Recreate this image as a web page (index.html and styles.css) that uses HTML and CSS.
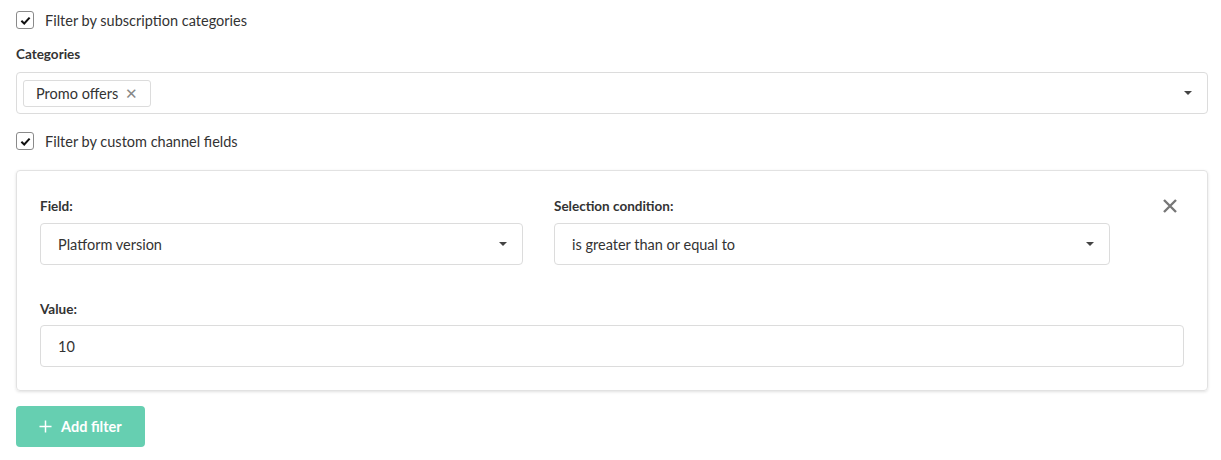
FILE: index.html
```html
<!DOCTYPE html>
<html>
<head>
<meta charset="utf-8">
<link rel="stylesheet" href="styles.css">
</head>
<body>
<div class="page">
  <label class="check">
    <span class="box"><svg viewBox="0 0 12 12" width="11" height="11"><path d="M1.5 6.2 L4.6 9.2 L10.5 2.8" fill="none" stroke="#111" stroke-width="2.2"/></svg></span>
    <span>Filter by subscription categories</span>
  </label>

  <div class="label cat-label">Categories</div>
  <div class="select multi">
    <span class="tag">Promo offers <span class="tag-x">✕</span></span>
    <span class="caret"></span>
  </div>

  <label class="check check2">
    <span class="box"><svg viewBox="0 0 12 12" width="11" height="11"><path d="M1.5 6.2 L4.6 9.2 L10.5 2.8" fill="none" stroke="#111" stroke-width="2.2"/></svg></span>
    <span>Filter by custom channel fields</span>
  </label>

  <div class="card">
    <div class="row">
      <div class="field">
        <div class="label">Field:</div>
        <div class="select"><span>Platform version</span><span class="caret"></span></div>
      </div>
      <div class="cond">
        <div class="label">Selection condition:</div>
        <div class="select"><span>is greater than or equal to</span><span class="caret"></span></div>
      </div>
      <div class="close">
        <svg viewBox="0 0 16 16" width="16" height="16"><path d="M2 2 L14 14 M14 2 L2 14" stroke="#777" stroke-width="2.4" fill="none"/></svg>
      </div>
    </div>
    <div class="value">
      <div class="label">Value:</div>
      <div class="input">10</div>
    </div>
  </div>

  <button class="add"><svg viewBox="0 0 14 14" width="13" height="13"><path d="M7 0.5 V13.5 M0.5 7 H13.5" stroke="#fff" stroke-width="1.6"/></svg><span>Add filter</span></button>
</div>
</body>
</html>
```

FILE: styles.css
```css
* { box-sizing: border-box; }
body {
  margin: 0;
  background: #fff;
  font-family: "Source Sans Pro", Lato, "Noto Sans", sans-serif;
  font-size: 14.5px;
  color: #333;
}
.page {
  padding: 11px 13px 0 16px;
}
.check {
  display: flex;
  align-items: center;
  gap: 11px;
  height: 18px;
}
.box {
  width: 18px;
  height: 18px;
  border: 1px solid #8a8a8a;
  border-radius: 3px;
  display: flex;
  align-items: center;
  justify-content: center;
}
.label {
  font-weight: 700;
  font-size: 13.5px;
  color: #333;
  line-height: 17px;
}
.cat-label {
  margin-top: 17px;
}
.select {
  height: 42px;
  border: 1px solid #dcdcdc;
  border-radius: 4px;
  display: flex;
  align-items: center;
  justify-content: space-between;
  padding: 0 15px 0 17px;
  margin-top: 8px;
}
.multi {
  padding-left: 6px;
  margin-top: 9px;
}
.tag {
  height: 27px;
  border: 1px solid #dcdcdc;
  border-radius: 3px;
  padding: 0 12px 0 12px;
  display: flex;
  align-items: center;
  gap: 7px;
}
.tag-x {
  color: #888;
  font-size: 14.5px;
}
.caret {
  width: 0;
  height: 0;
  border-left: 4.5px solid transparent;
  border-right: 4.5px solid transparent;
  border-top: 4.5px solid #444;
}
.check2 {
  margin-top: 18px;
}
.card {
  margin-top: 20px;
  border: 1px solid #e2e2e2;
  border-radius: 4px;
  box-shadow: 0 1px 3px rgba(0,0,0,0.12);
  padding: 27px 23px 23px 23px;
}
.row {
  display: grid;
  grid-template-columns: 483px 556px 1fr;
  column-gap: 31px;
}
.close {
  display: flex;
  justify-content: flex-end;
  padding-right: 6px;
  padding-top: 0px;
}
.value {
  margin-top: 36px;
}
.input {
  margin-top: 7px;
  height: 42px;
  border: 1px solid #dcdcdc;
  border-radius: 4px;
  display: flex;
  align-items: center;
  padding-left: 17px;
}
.add {
  margin-top: 15px;
  height: 41px;
  width: 129px;
  background: #66cfb1;
  border: none;
  border-radius: 4px;
  color: #fff;
  font-family: inherit;
  font-weight: 700;
  font-size: 14.5px;
  display: flex;
  align-items: center;
  gap: 9px;
  padding: 0 0 0 23px;
}
```
